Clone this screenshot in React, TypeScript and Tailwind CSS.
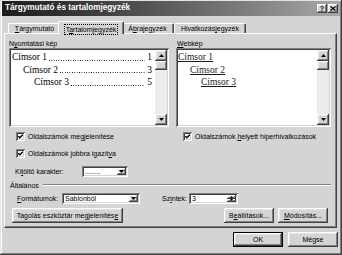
import React from "react";

const RAISED =
  "shadow-[inset_-1px_-1px_0_#404040,inset_1px_1px_0_#ffffff,inset_-2px_-2px_0_#808080,inset_2px_2px_0_#e4e4e4]";
const SUNKEN =
  "shadow-[inset_1px_1px_0_#808080,inset_-1px_-1px_0_#ffffff,inset_2px_2px_0_#404040,inset_-2px_-2px_0_#d4d4d4]";

function ArrowDown() {
  return (
    <svg width="5" height="3" viewBox="0 0 5 3">
      <path d="M0 0H5L2.5 3Z" fill="#000" />
    </svg>
  );
}
function ArrowUp() {
  return (
    <svg width="5" height="3" viewBox="0 0 5 3">
      <path d="M0 3H5L2.5 0Z" fill="#000" />
    </svg>
  );
}

function ScrollBtn({ up }: { up?: boolean }) {
  return (
    <div className={`w-[12px] h-[11px] bg-[#d4d4d4] ${RAISED} flex items-center justify-center`}>
      {up ? <ArrowUp /> : <ArrowDown />}
    </div>
  );
}

function ScrollBar() {
  return (
    <div className="w-[12px] h-full flex flex-col">
      <ScrollBtn up />
      <div className={`w-[12px] h-[9px] bg-[#d4d4d4] ${RAISED}`} />
      <div className="flex-1 bg-[#ececec]" />
      <ScrollBtn />
    </div>
  );
}

function Check() {
  return (
    <div className={`w-[9px] h-[9px] bg-white ${SUNKEN} shrink-0`}>
      <svg width="9" height="9" viewBox="0 0 9 9">
        <path d="M2.3 4.2L3.8 5.7L6.8 2.7" stroke="#000" strokeWidth="1.4" fill="none" />
      </svg>
    </div>
  );
}

function Leader({ text, num, indent }: { text: string; num: string; indent: string }) {
  return (
    <div className={`flex items-end h-[12.5px] ${indent}`}>
      <span className="whitespace-nowrap">{text}</span>
      <div className="flex-1 mx-[2px] mb-[2px] h-[1px] bg-[linear-gradient(to_right,#000_0_1px,transparent_1px)] bg-[length:2.4px_1px]" />
      <span>{num}</span>
    </div>
  );
}

function Button({ children, w, def }: { children: React.ReactNode; w: string; def?: boolean }) {
  if (def) {
    return (
      <div className={`${w} h-[15px] border border-black`}>
        <div className={`w-full h-full ${RAISED} flex items-center justify-center`}>{children}</div>
      </div>
    );
  }
  return <div className={`${w} h-[15px] ${RAISED} flex items-center justify-center`}>{children}</div>;
}

function Combo({ w, children }: { w: string; children: React.ReactNode }) {
  return (
    <div className={`${w} h-[11px] bg-white ${SUNKEN} flex items-center p-[2px]`}>
      <div className="flex-1 pl-[1px] overflow-hidden whitespace-nowrap">{children}</div>
      <div className={`w-[9px] h-[7px] bg-[#d4d4d4] ${RAISED} flex items-center justify-center`}>
        <ArrowDown />
      </div>
    </div>
  );
}

export default function App() {
  return (
    <div className="w-[342px] h-[255px] bg-[#d4d4d4] font-['Liberation_Sans',Arial,sans-serif] text-[7px] text-black leading-none pt-[1px] px-[2px] pb-[2px] shadow-[inset_-1px_-1px_0_#404040,inset_1px_1px_0_#e4e4e4,inset_-2px_-2px_0_#808080,inset_2px_2px_0_#ffffff] flex flex-col">
      {/* Title bar */}
      <div className="h-[15px] bg-linear-to-r from-[#1c1c1c] to-[#a9a9a9] flex items-center justify-between pl-[3px] pr-[2px]">
        <span className="text-white font-bold text-[8.2px]">Tárgymutató és tartalomjegyzék</span>
        <div className="flex">
          <div className={`w-[10px] h-[9px] bg-[#d4d4d4] ${RAISED} flex items-center justify-center font-bold text-[7px]`}>
            ?
          </div>
          <div className={`ml-[1px] w-[10px] h-[9px] bg-[#d4d4d4] ${RAISED} flex items-center justify-center`}>
            <svg width="6" height="5" viewBox="0 0 6 5">
              <path d="M0.5 0.5L5.5 4.5M5.5 0.5L0.5 4.5" stroke="#000" strokeWidth="1.2" />
            </svg>
          </div>
        </div>
      </div>

      {/* Tabs */}
      <div className="mt-[5px] h-[12px] flex items-end pl-[6px]">
        <div className="w-[52px] h-[10px] border-l border-t border-white rounded-tl-[2px] flex items-center justify-center">
          <span>
            <span className="underline">T</span>árgymutató
          </span>
        </div>
        <div className="relative z-10 -mx-[2px] mb-[-1px] w-[66px] h-[13px] bg-[#d4d4d4] border-l border-t border-white border-r border-r-[#404040] rounded-t-[2px] shadow-[inset_-1px_0_0_#808080] flex items-start justify-center pt-[2px]">
          <span className="border border-dotted border-black px-[1px] py-[1px]">
            T<span className="underline">a</span>rtalomjegyzék
          </span>
        </div>
        <div className="w-[52px] h-[10px] border-t border-white border-r border-r-[#404040] rounded-tr-[2px] shadow-[inset_-1px_0_0_#808080] flex items-center justify-center">
          <span>
            Á<span className="underline">b</span>rajegyzék
          </span>
        </div>
        <div className="w-[72px] h-[10px] border-l border-t border-white border-r border-r-[#404040] rounded-t-[2px] shadow-[inset_-1px_0_0_#808080] flex items-center justify-center">
          <span>
            Hivatkozás<span className="underline">j</span>egyzék
          </span>
        </div>
      </div>

      {/* Panel */}
      <div className="ml-[2px] w-[333px] h-[195px] border-l border-t border-white border-r border-b border-r-[#404040] border-b-[#404040] shadow-[inset_-1px_-1px_0_#808080] pl-[4px] pr-[5px] pt-[5px] flex flex-col">
        <div className="h-[9px] flex items-center">
          <div className="w-[167px]">
            N<span className="underline">y</span>omtatási kép
          </div>
          <div className="pl-[1px]">
            <span className="underline">W</span>ebkép
          </div>
        </div>
        <div className="h-[79px] flex gap-[7px]">
          <div className={`w-[160px] h-full bg-white ${SUNKEN} p-[2px] flex`}>
            <div className="flex-1 pl-[1px] pr-[3px] font-['Liberation_Serif','Times_New_Roman',serif] text-[9.5px] leading-none">
              <Leader text="Címsor 1" num="1" indent="pl-[0px]" />
              <Leader text="Címsor 2" num="3" indent="pl-[11px]" />
              <Leader text="Címsor 3" num="5" indent="pl-[22px]" />
            </div>
            <ScrollBar />
          </div>
          <div className={`flex-1 h-full bg-white ${SUNKEN} p-[2px] flex`}>
            <div className="flex-1 font-['Liberation_Serif','Times_New_Roman',serif] text-[9.5px] leading-none text-[#1a1a1a]">
              <div className="h-[12.5px] flex items-end">
                <span className="underline">Címsor 1</span>
              </div>
              <div className="h-[12.5px] pl-[12px] flex items-end">
                <span className="underline">Címsor 2</span>
              </div>
              <div className="h-[12.5px] pl-[23px] flex items-end">
                <span className="underline">Címsor 3</span>
              </div>
            </div>
            <ScrollBar />
          </div>
        </div>

        <div className="flex">
          <div className="w-[167px] flex flex-col">
            <div className="mt-[3px] h-[12px] flex items-center pl-[7px] gap-[3px]">
              <Check />
              <span>
                Oldalszámok me<span className="underline">g</span>jelenítése
              </span>
            </div>
            <div className="mt-[5px] h-[12px] flex items-center pl-[7px] gap-[3px]">
              <Check />
              <span>
                Oldalszámok jobbra igazít<span className="underline">v</span>a
              </span>
            </div>
            <div className="mt-[7px] h-[11px] flex items-center pl-[6px]">
              <span className="w-[67px]">
                Ki<span className="underline">t</span>öltő karakter:
              </span>
              <Combo w="w-[46px]">........</Combo>
            </div>
          </div>
          <div className="flex-1 flex flex-col">
            <div className="mt-[3px] h-[12px] flex items-center pl-[7px] gap-[3px]">
              <Check />
              <span>
                Oldalszámok <span className="underline">h</span>elyett hiperhivatkozások
              </span>
            </div>
          </div>
        </div>

        {/* Általános */}
        <div className="mt-[3px] h-[10px] flex items-center pl-[1px]">
          <span>Általános</span>
          <div className="flex-1 ml-[4px] h-[2px] border-t border-t-[#808080] border-b border-b-white" />
        </div>
        <div className="mt-[3px] h-[11px] flex items-center pl-[8px]">
          <span className="w-[45px]">
            <span className="underline">F</span>ormátumok:
          </span>
          <Combo w="w-[78px]">Sablonból</Combo>
          <span className="ml-[22px] w-[27px]">
            Sz<span className="underline">i</span>ntek:
          </span>
          <div className={`w-[49px] h-[11px] bg-white ${SUNKEN} flex items-center p-[2px]`}>
            <div className="flex-1 pl-[1px]">3</div>
            <div className="w-[9px] h-[7px] flex flex-col">
              <div className={`flex-1 bg-[#d4d4d4] ${RAISED} flex items-center justify-center`}>
                <svg width="3" height="2" viewBox="0 0 3 2">
                  <path d="M0 2H3L1.5 0Z" fill="#000" />
                </svg>
              </div>
              <div className={`flex-1 bg-[#d4d4d4] ${RAISED} flex items-center justify-center`}>
                <svg width="3" height="2" viewBox="0 0 3 2">
                  <path d="M0 0H3L1.5 2Z" fill="#000" />
                </svg>
              </div>
            </div>
          </div>
        </div>
        <div className="mt-[4px] h-[15px] flex items-center pl-[3px] pr-[3px]">
          <Button w="w-[111px]">
            <span>
              Tagolás eszköztár megjelenítés<span className="underline">e</span>
            </span>
          </Button>
          <div className="ml-auto flex gap-[4px]">
            <Button w="w-[50px]">
              <span>
                B<span className="underline">e</span>állítások...
              </span>
            </Button>
            <Button w="w-[50px]">
              <span>
                <span className="underline">M</span>ódosítás...
              </span>
            </Button>
          </div>
        </div>
      </div>

      {/* Footer */}
      <div className="mt-[4px] flex justify-end gap-[5px] pr-[2px]">
        <Button w="w-[50px]" def>
          OK
        </Button>
        <Button w="w-[50px]">Mégse</Button>
      </div>
    </div>
  );
}
